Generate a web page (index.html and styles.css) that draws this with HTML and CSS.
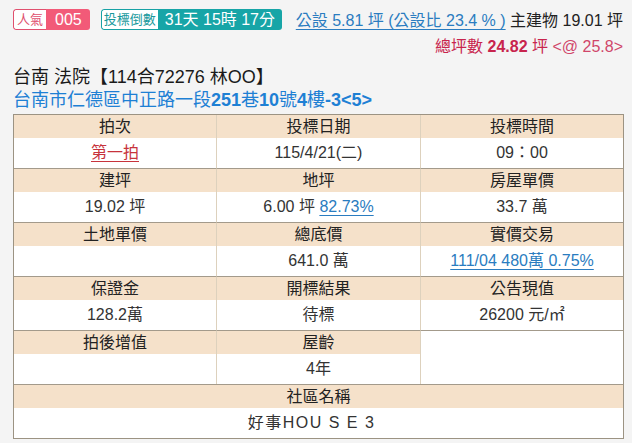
FILE: index.html
```html
<!DOCTYPE html>
<html lang="zh-Hant">
<head>
<meta charset="utf-8">
<link rel="stylesheet" href="styles.css">
</head>
<body>
<div class="top">
  <div class="badges">
    <div class="badge pink"><span class="lbl">人氣</span><span class="val">005</span></div>
    <div class="badge teal"><span class="lbl">投標倒數</span><span class="val big">31天 15時 17分</span></div>
  </div>
  <div class="summary">
    <div><a class="link">公設 5.81 坪 (公設比 23.4 % )</a> 主建物 19.01 坪</div>
    <div class="total">總坪數 <b>24.82</b> 坪 <span class="at">&lt;@ 25.8&gt;</span></div>
  </div>
</div>
<div class="title">台南 法院【114合72276 林OO】</div>
<div class="addr">台南市仁德區中正路一段<b>251</b>巷<b>10</b>號<b>4</b>樓<b>-3&lt;5&gt;</b></div>

<div class="grid">
  <div class="cell"><div class="th">拍次</div><div class="td"><a class="red">第一拍</a></div></div>
  <div class="cell"><div class="th">投標日期</div><div class="td">115/4/21(二)</div></div>
  <div class="cell"><div class="th">投標時間</div><div class="td">09：00</div></div>

  <div class="cell"><div class="th">建坪</div><div class="td">19.02 坪</div></div>
  <div class="cell"><div class="th">地坪</div><div class="td">6.00 坪 <a class="link">82.73%</a></div></div>
  <div class="cell"><div class="th">房屋單價</div><div class="td">33.7 萬</div></div>

  <div class="cell"><div class="th">土地單價</div><div class="td"></div></div>
  <div class="cell"><div class="th">總底價</div><div class="td">641.0 萬</div></div>
  <div class="cell"><div class="th">實價交易</div><div class="td"><a class="link">111/04 480萬 0.75%</a></div></div>

  <div class="cell"><div class="th">保證金</div><div class="td">128.2萬</div></div>
  <div class="cell"><div class="th">開標結果</div><div class="td">待標</div></div>
  <div class="cell"><div class="th">公告現值</div><div class="td">26200 元/㎡</div></div>

  <div class="cell"><div class="th">拍後增值</div><div class="td"></div></div>
  <div class="cell"><div class="th">屋齡</div><div class="td">4年</div></div>
  <div class="cell blank"></div>

  <div class="cell full"><div class="th">社區名稱</div><div class="td spaced">好事HOU S E 3</div></div>
</div>
</body>
</html>
```
FILE: styles.css
```css
body {
  margin: 0;
  background: #f4f4f4;
  font-family: "Liberation Sans", "Noto Sans CJK TC", sans-serif;
  color: #222;
}
.top {
  display: flex;
  justify-content: space-between;
  align-items: flex-start;
  height: 60px;
  padding: 0 9px 0 13px;
}
.badges {
  display: flex;
  gap: 11px;
  margin-top: 9px;
}
.badge {
  display: flex;
  height: 21px;
  border-radius: 3px;
  overflow: hidden;
}
.badge .lbl {
  background: #fff;
  font-size: 13px;
  line-height: 19px;
  padding: 0 2px;
  border: 1px solid;
  border-right: none;
  border-radius: 3px 0 0 3px;
}
.badge .val {
  color: #fff;
  font-size: 16px;
  line-height: 21px;
  padding: 0 8px 0 9px;
}
.badge .big {
  font-size: 16px;
  padding: 0 7px 0 7px;
}
.pink .lbl { color: #e0506e; border-color: #e0506e; padding: 0 3px; }
.pink .val { background: #f25a78; }
.teal .lbl { color: #17999c; border-color: #17a2a5; }
.teal .val { background: #17a5a7; }
.summary {
  text-align: right;
  font-size: 16px;
  line-height: 26px;
  padding-top: 8px;
  color: #222;
}
.link {
  color: #2a7cc0;
  text-decoration: underline;
  text-underline-offset: 3px;
}
.total {
  color: #c8244d;
}
.total .at { color: #d0466a; }
.title, .addr {
  font-size: 18px;
  line-height: 23px;
  padding-left: 13px;
}
.title {
  margin-top: 6px;
  color: #1a1a1a;
}
.addr {
  color: #1e80d4;
}
.grid {
  display: grid;
  grid-template-columns: 203px 204px 202px;
  margin: 2px 0 0 13px;
  width: 611px;
  box-sizing: border-box;
  border: 1px solid #9c9383;
  background: #fff;
}
.cell {
  border-right: 1px solid #ddd1bd;
  border-top: 1px solid #a39a8b;
  font-size: 16px;
  text-align: center;
}
.cell:nth-child(-n+3) { border-top: none; }
.cell:nth-child(3n) { border-right: none; }
.th {
  background: #f5e1ca;
  height: 23px;
  line-height: 23px;
  color: #222;
}
.td {
  height: 30px;
  line-height: 29px;
  color: #333;
}
.spaced { letter-spacing: 1.5px; padding-right: 14px; }
.red {
  color: #c7333c;
  text-decoration: underline;
  text-underline-offset: 3px;
}
.blank { background: #fff; }
.full {
  grid-column: 1 / 4;
  border-right: none;
}
```
